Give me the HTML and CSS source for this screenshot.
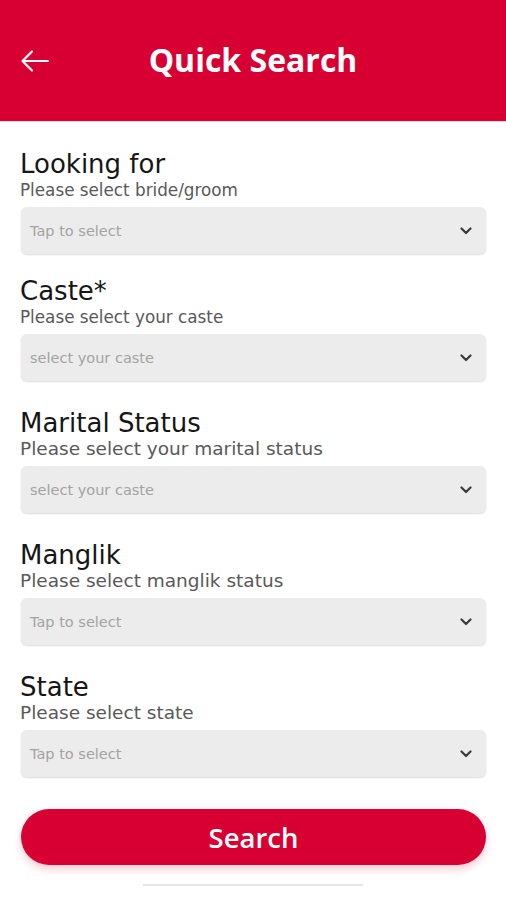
FILE: index.html
```html
<!DOCTYPE html>
<html lang="en">
<head>
<meta charset="utf-8">
<title>Quick Search</title>
<link rel="stylesheet" href="styles.css">
</head>
<body>
<div class="screen">
  <header class="appbar">
    <svg class="back" width="30" height="24" viewBox="0 0 30 24" aria-hidden="true">
      <path d="M28 12H3M12 2.5L2.5 12L12 21.5" fill="none" stroke="#fff" stroke-width="2.2" stroke-linecap="round" stroke-linejoin="round"/>
    </svg>
    <h1 class="title">Quick Search</h1>
  </header>

  <main class="form">
    <section class="field">
      <div class="label">Looking for</div>
      <div class="hint hint--small">Please select bride/groom</div>
      <div class="select"><span class="placeholder">Tap to select</span><svg class="chev" width="12" height="8" viewBox="0 0 12 8"><path d="M1.5 1.5L6 6L10.5 1.5" fill="none" stroke="#3a3a3a" stroke-width="2.2" stroke-linecap="round" stroke-linejoin="round"/></svg></div>
    </section>
    <section class="field field--tight">
      <div class="label">Caste*</div>
      <div class="hint hint--small">Please select your caste</div>
      <div class="select"><span class="placeholder">select your caste</span><svg class="chev" width="12" height="8" viewBox="0 0 12 8"><path d="M1.5 1.5L6 6L10.5 1.5" fill="none" stroke="#3a3a3a" stroke-width="2.2" stroke-linecap="round" stroke-linejoin="round"/></svg></div>
    </section>
    <section class="field">
      <div class="label">Marital Status</div>
      <div class="hint">Please select your marital status</div>
      <div class="select"><span class="placeholder">select your caste</span><svg class="chev" width="12" height="8" viewBox="0 0 12 8"><path d="M1.5 1.5L6 6L10.5 1.5" fill="none" stroke="#3a3a3a" stroke-width="2.2" stroke-linecap="round" stroke-linejoin="round"/></svg></div>
    </section>
    <section class="field">
      <div class="label">Manglik</div>
      <div class="hint">Please select manglik status</div>
      <div class="select"><span class="placeholder">Tap to select</span><svg class="chev" width="12" height="8" viewBox="0 0 12 8"><path d="M1.5 1.5L6 6L10.5 1.5" fill="none" stroke="#3a3a3a" stroke-width="2.2" stroke-linecap="round" stroke-linejoin="round"/></svg></div>
    </section>
    <section class="field">
      <div class="label">State</div>
      <div class="hint">Please select state</div>
      <div class="select"><span class="placeholder">Tap to select</span><svg class="chev" width="12" height="8" viewBox="0 0 12 8"><path d="M1.5 1.5L6 6L10.5 1.5" fill="none" stroke="#3a3a3a" stroke-width="2.2" stroke-linecap="round" stroke-linejoin="round"/></svg></div>
    </section>

    <button class="search-btn" type="button">Search</button>
  </main>
  <div class="home-bar"></div>
</div>
</body>
</html>
```

FILE: styles.css
```css
* { box-sizing: border-box; }
html, body { margin: 0; padding: 0; background: #fff; }
body {
  font-family: "DejaVu Sans", "Open Sans", "Liberation Sans", sans-serif;
  color: #1a1a1a;
  width: 506px;
  height: 900px;
  overflow: hidden;
}
.screen { display: flex; flex-direction: column; height: 900px; }

.appbar {
  height: 122px;
  background: #d80032;
  border-bottom: 1px solid #f3d9dd;
  display: flex;
  align-items: center;
  position: relative;
}
.back { position: absolute; left: 20px; top: 49px; }
.title {
  margin: 0;
  width: 100%;
  text-align: center;
  color: #fff;
  font-family: "Open Sans", "DejaVu Sans", sans-serif;
  font-size: 32px;
  font-weight: 700;
  line-height: 40px;
  margin-top: -2px;
}

.form {
  padding: 27px 20px 0 20px;
  display: flex;
  flex-direction: column;
  gap: 27px;
}
.field { display: flex; flex-direction: column; }
.field--tight { margin-top: -5px; }
.label {
  font-size: 26px;
  line-height: 30px;
  color: #161616;
  font-weight: 400;
}
.hint {
  font-size: 18.5px;
  line-height: 22px;
  color: #595959;
}
.hint--small { font-size: 16.8px; }
.select {
  margin-top: 6px;
  margin-left: 1px;
  height: 47px;
  background: #ececec;
  border-radius: 6px;
  box-shadow: 0 1px 2px rgba(0,0,0,0.14);
  display: flex;
  align-items: center;
  justify-content: space-between;
  padding: 0 14px 0 9px;
}
.placeholder { font-size: 14.5px; color: #a3a3a3; }
.chev { display: block; }

.search-btn {
  margin-top: 5px;
  margin-left: 1px;
  height: 56px;
  border: none;
  border-radius: 28px;
  background: #d80032;
  color: #fff;
  font-family: "Open Sans", "DejaVu Sans", sans-serif;
  font-size: 27.5px;
  font-weight: 600;
  box-shadow: 0 4px 8px rgba(216,0,50,0.22);
}
.home-bar {
  margin: 19px auto 0;
  width: 220px;
  height: 2px;
  background: #e6e6e6;
}
```
